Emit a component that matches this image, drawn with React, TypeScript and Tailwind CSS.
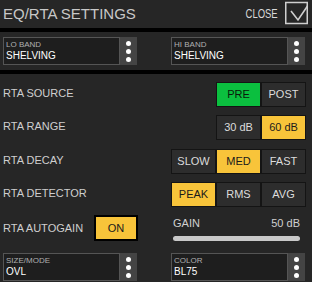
import React from "react";

type Tone = "off" | "yellow" | "green";

const toneClass: Record<Tone, string> = {
  off: "bg-[#2d2d2d] text-[#dcdcdc]",
  yellow: "bg-[#f8c43a] text-[#1a1a1a]",
  green: "bg-[#0bbf3f] text-[#0a1a0a]",
};

const SegButton: React.FC<{ label: string; tone?: Tone }> = ({ label, tone = "off" }) => (
  <div
    className={`w-[45px] h-[25px] border border-[#141414] flex items-center justify-center text-[11px] ${toneClass[tone]}`}
  >
    {label}
  </div>
);

const Dots = () => (
  <div className="w-[17px] h-full bg-[#444444] flex flex-col items-center justify-center gap-[3px]">
    <span className="w-[5px] h-[5px] rounded-full bg-white" />
    <span className="w-[5px] h-[5px] rounded-full bg-white" />
    <span className="w-[5px] h-[5px] rounded-full bg-white" />
  </div>
);

const Picker: React.FC<{ label: string; value: string }> = ({ label, value }) => (
  <div className="flex w-[134px] h-[28px]">
    <div className="flex-1 border border-[#555555] bg-[#1e1e1e] pl-[2px] pt-[2px]">
      <div className="text-[8px] leading-[10px] text-[#b0b0b0]">{label}</div>
      <div className="text-[10px] leading-[12px] text-white">{value}</div>
    </div>
    <Dots />
  </div>
);

const Row: React.FC<{ label: string; children: React.ReactNode }> = ({ label, children }) => (
  <div className="flex items-center justify-between h-[25px]">
    <span className="text-[11px] text-[#cfcfcf] -mt-[2px]">{label}</span>
    <div className="flex">{children}</div>
  </div>
);

export default function App() {
  return (
    <div className="w-[312px] h-[282px] bg-black overflow-hidden flex flex-col font-['Liberation_Sans',Arial,sans-serif]">
      {/* header */}
      <div className="h-[28px] bg-[#262626] flex items-center justify-between pl-[3px] pr-[3px]">
        <span className="text-[15px] text-[#c8c8c8]">EQ/RTA SETTINGS</span>
        <div className="flex items-center">
          <span className="text-[12px] text-[#d8d8d8] inline-block scale-x-[0.79] origin-right mr-[7px]">
            CLOSE
          </span>
          <svg width="24" height="24" viewBox="0 0 24 24" className="-mt-[2px]">
            <rect x="0.75" y="1.5" width="21.5" height="21" fill="none" stroke="#cfcfcf" strokeWidth="1.5" />
            <path d="M6 10 L13 19 L22.5 5" fill="none" stroke="#cfcfcf" strokeWidth="1.6" />
          </svg>
        </div>
      </div>

      {/* band pickers */}
      <div className="mt-[4px] h-[38px] bg-[#262626] flex items-center justify-between pl-[3px] pr-[7px]">
        <Picker label="LO BAND" value="SHELVING" />
        <Picker label="HI BAND" value="SHELVING" />
      </div>

      {/* settings */}
      <div className="mt-[4px] flex-1 bg-[#262626] pl-[3px] pr-[6px] pt-[8px] flex flex-col">
        <Row label="RTA SOURCE">
          <SegButton label="PRE" tone="green" />
          <SegButton label="POST" />
        </Row>
        <div className="h-[8px]" />
        <Row label="RTA RANGE">
          <SegButton label="30 dB" />
          <SegButton label="60 dB" tone="yellow" />
        </Row>
        <div className="h-[9px]" />
        <Row label="RTA DECAY">
          <SegButton label="SLOW" />
          <SegButton label="MED" tone="yellow" />
          <SegButton label="FAST" />
        </Row>
        <div className="h-[8px]" />
        <Row label="RTA DETECTOR">
          <SegButton label="PEAK" tone="yellow" />
          <SegButton label="RMS" />
          <SegButton label="AVG" />
        </Row>

        <div className="mt-[8px] flex h-[26px]">
          <div className="w-[170px] flex items-center">
            <span className="w-[91px] text-[11px] text-[#cfcfcf]">RTA AUTOGAIN</span>
            <div className="w-[44px] h-[26px] border-2 border-black bg-[#f8c43a] text-[#1a1a1a] text-[11px] flex items-center justify-center">
              ON
            </div>
          </div>
          <div className="w-[127px] flex flex-col">
            <div className="flex justify-between text-[11px] leading-[13px] text-[#d0d0d0] mt-[2px]">
              <span>GAIN</span>
              <span>50 dB</span>
            </div>
            <div className="mt-[6px] h-[6px] rounded-full bg-[#c8c8c8]" />
          </div>
        </div>

        <div className="mt-[12px] flex justify-between pr-[1px]">
          <Picker label="SIZE/MODE" value="OVL" />
          <Picker label="COLOR" value="BL75" />
        </div>
      </div>
    </div>
  );
}
